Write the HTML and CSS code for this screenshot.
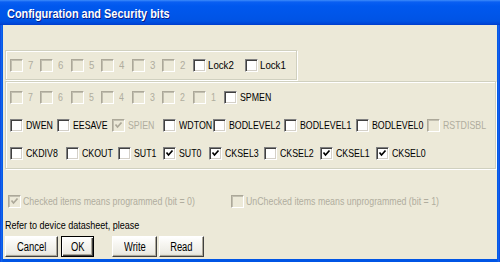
FILE: index.html
```html
<!DOCTYPE html>
<html>
<head>
<meta charset="utf-8">
<link rel="stylesheet" href="styles.css">
</head>
<body>
<div class="window">
  <div class="titlebar"><span class="title">Configuration and Security bits</span></div>
  <div class="client">
    <div class="group g1">
      <div class="row r-lock">
        <div class="item dis"><span class="cb"></span><span class="lbl num">7</span></div>
        <div class="item dis"><span class="cb"></span><span class="lbl num">6</span></div>
        <div class="item dis"><span class="cb"></span><span class="lbl num">5</span></div>
        <div class="item dis"><span class="cb"></span><span class="lbl num">4</span></div>
        <div class="item dis"><span class="cb"></span><span class="lbl num">3</span></div>
        <div class="item dis"><span class="cb"></span><span class="lbl num">2</span></div>
        <div class="item"><span class="cb"></span><span class="lbl">Lock2</span></div>
        <div class="item"><span class="cb"></span><span class="lbl">Lock1</span></div>
      </div>
    </div>
    <div class="group g2">
      <div class="row r-ext">
        <div class="item dis"><span class="cb"></span><span class="lbl num">7</span></div>
        <div class="item dis"><span class="cb"></span><span class="lbl num">6</span></div>
        <div class="item dis"><span class="cb"></span><span class="lbl num">5</span></div>
        <div class="item dis"><span class="cb"></span><span class="lbl num">4</span></div>
        <div class="item dis"><span class="cb"></span><span class="lbl num">3</span></div>
        <div class="item dis"><span class="cb"></span><span class="lbl num">2</span></div>
        <div class="item dis"><span class="cb"></span><span class="lbl num">1</span></div>
        <div class="item"><span class="cb"></span><span class="lbl">SPMEN</span></div>
      </div>
      <div class="row r-high">
        <div class="item"><span class="cb"></span><span class="lbl">DWEN</span></div>
        <div class="item"><span class="cb"></span><span class="lbl">EESAVE</span></div>
        <div class="item dis"><span class="cb on"><svg viewBox="0 0 11 11" width="11" height="11"><path d="M2.5 4.5 L4.5 7 L8.5 2.5" /></svg></span><span class="lbl">SPIEN</span></div>
        <div class="item clip"><span class="cb"></span><span class="lbl">WDTON</span></div>
        <div class="item"><span class="cb"></span><span class="lbl">BODLEVEL2</span></div>
        <div class="item"><span class="cb"></span><span class="lbl">BODLEVEL1</span></div>
        <div class="item"><span class="cb"></span><span class="lbl">BODLEVEL0</span></div>
        <div class="item dis"><span class="cb"></span><span class="lbl">RSTDISBL</span></div>
      </div>
      <div class="row r-low">
        <div class="item"><span class="cb"></span><span class="lbl">CKDIV8</span></div>
        <div class="item"><span class="cb"></span><span class="lbl">CKOUT</span></div>
        <div class="item"><span class="cb"></span><span class="lbl">SUT1</span></div>
        <div class="item"><span class="cb on"><svg viewBox="0 0 11 11" width="11" height="11"><path d="M2.5 4.5 L4.5 7 L8.5 2.5" /></svg></span><span class="lbl">SUT0</span></div>
        <div class="item"><span class="cb on"><svg viewBox="0 0 11 11" width="11" height="11"><path d="M2.5 4.5 L4.5 7 L8.5 2.5" /></svg></span><span class="lbl">CKSEL3</span></div>
        <div class="item"><span class="cb"></span><span class="lbl">CKSEL2</span></div>
        <div class="item"><span class="cb on"><svg viewBox="0 0 11 11" width="11" height="11"><path d="M2.5 4.5 L4.5 7 L8.5 2.5" /></svg></span><span class="lbl">CKSEL1</span></div>
        <div class="item"><span class="cb on"><svg viewBox="0 0 11 11" width="11" height="11"><path d="M2.5 4.5 L4.5 7 L8.5 2.5" /></svg></span><span class="lbl">CKSEL0</span></div>
      </div>
    </div>
    <div class="legend">
      <div class="item dis"><span class="cb on"><svg viewBox="0 0 11 11" width="11" height="11"><path d="M2.5 4.5 L4.5 7 L8.5 2.5" /></svg></span><span class="lbl">Checked items means programmed (bit = 0)</span></div>
      <div class="item dis"><span class="cb"></span><span class="lbl">UnChecked items means unprogrammed (bit = 1)</span></div>
    </div>
    <div class="note"><span class="note-text">Refer to device datasheet, please</span></div>
    <div class="buttons">
      <button class="btn cancel"><span class="btn-text">Cancel</span></button>
      <button class="btn ok"><span class="btn-text">OK</span></button>
      <button class="btn write"><span class="btn-text">Write</span></button>
      <button class="btn read"><span class="btn-text">Read</span></button>
    </div>
  </div>
</div>
</body>
</html>
```
FILE: styles.css
```css
html, body {
  margin: 0;
  padding: 0;
  background: #ffffff;
}

.window {
  width: 500px;
  height: 262px;
  display: flex;
  flex-direction: column;
  background: linear-gradient(90deg, #0831D9 0, #166AEE 1px, #0055E5 3px, #0055E5 497px, #166AEE 499px, #0831D9 500px);
  overflow: hidden;
}

.titlebar {
  height: 25px;
  flex: none;
  background: linear-gradient(180deg, #3D8CFA 0, #0A5FF2 2px, #0058EE 6px, #0055E8 16px, #0053E4 21px, #0045D6 24px, #003BC8 25px);
  display: flex;
  align-items: center;
  padding: 1px 0 0 7px;
  box-sizing: border-box;
}

.title {
  display: inline-block;
  font-family: "Liberation Sans", Arial, sans-serif;
  font-weight: bold;
  font-size: 13px;
  color: #ffffff;
  text-shadow: 1px 1px 0 #0A1883;
  transform: scaleX(0.84);
  transform-origin: 0 50%;
  white-space: nowrap;
}

.client {
  flex: 1;
  margin: 0 3px 3px 3px;
  background: #ECE9D8;
  font-family: "Liberation Sans", Arial, sans-serif;
  font-size: 11px;
  color: #000000;
  display: flex;
  flex-direction: column;
}

.group {
  border: 1px solid #D0D0BF;
  box-shadow: inset 1px 1px 0 #FFFFFF, 1px 1px 0 #FFFFFF;
  margin-left: 2px;
}

.g1 {
  margin-top: 25px;
  width: 290px;
  height: 28px;
}

.g2 {
  margin-top: 1px;
  width: 489px;
  height: 85px;
  padding-top: 1px;
}

.row {
  display: grid;
  height: 28px;
  align-items: center;
  padding-left: 4px;
}

.r-lock { grid-template-columns: 30px 31px 30px 31px 30px 31px 52px auto; }
.r-ext  { grid-template-columns: 30px 31px 30px 31px 30px 31px 31px auto; }
.r-high { grid-template-columns: 47px 55px 51px 50px 71px 72px 71px auto; }
.r-low  { grid-template-columns: 56px 52px 45px 46px 55px 56px 56px auto; }

.item {
  display: flex;
  align-items: center;
  white-space: nowrap;
  min-width: 0;
}

.item.clip {
  overflow: hidden;
}

.cb {
  flex: none;
  width: 13px;
  height: 13px;
  box-sizing: border-box;
  background: #FFFFFF;
  border-style: solid;
  border-width: 1px;
  border-color: #808080 #FFFFFF #FFFFFF #808080;
  box-shadow: inset 1px 1px 0 #404040, inset -1px -1px 0 #D4D0C8;
  display: flex;
  align-items: center;
  justify-content: center;
}

.cb svg {
  display: block;
}

.cb path {
  fill: none;
  stroke: #000000;
  stroke-width: 1.7;
}

.dis .cb {
  background: #ECE9D8;
  border-color: #ACA899 #FFFFFF #FFFFFF #ACA899;
  box-shadow: inset 1px 1px 0 #C2BFB0, inset -1px -1px 0 #ECE9D8;
}

.dis .cb path {
  stroke: #ACA899;
}

.lbl {
  display: inline-block;
  margin-left: 3px;
  line-height: 14px;
  transform-origin: 0 50%;
  transform: scaleX(0.8);
}

.g1 .lbl {
  margin-left: 2px;
  transform: scaleX(0.88);
}

.lbl.num {
  margin-left: 5px;
}

.dis .lbl {
  color: #B0AD9E;
}

.legend {
  display: grid;
  grid-template-columns: 223px auto;
  height: 20px;
  align-items: center;
  margin-top: 22px;
  padding-left: 5px;
}

.legend .lbl {
  margin-left: 2px;
  transform: scaleX(0.8);
}

.note {
  margin-top: 7px;
  padding-left: 2px;
  line-height: 14px;
}

.note-text {
  display: inline-block;
  white-space: nowrap;
  transform-origin: 0 50%;
  transform: scaleX(0.82);
}

.buttons {
  display: flex;
  margin-top: 4px;
  padding-left: 2px;
  height: 21px;
}

.btn {
  height: 21px;
  padding: 0;
  margin: 0;
  font-family: "Liberation Sans", Arial, sans-serif;
  font-size: 12px;
  color: #000000;
  background: linear-gradient(180deg, #FFFFFF 0, #F6F5F0 40%, #ECEBE4 85%, #DCDACD 100%);
  border-style: solid;
  border-width: 1px;
  border-color: #FFFFFF #404040 #404040 #FFFFFF;
  box-shadow: inset -1px -1px 0 #ACA899;
  box-sizing: border-box;
  display: flex;
  align-items: center;
  justify-content: center;
  overflow: visible;
}

.btn-text {
  display: inline-block;
  transform: scaleX(0.78);
  transform-origin: 50% 50%;
}

.cancel { width: 53px; }
.ok {
  width: 33px;
  margin-left: 3px;
  border-color: #000000;
  box-shadow: inset 1px 1px 0 #FFFFFF, inset -1px -1px 0 #404040, inset -2px -2px 0 #ACA899;
}
.write { width: 45px; margin-left: 18px; }
.read { width: 45px; margin-left: 2px; }
```
